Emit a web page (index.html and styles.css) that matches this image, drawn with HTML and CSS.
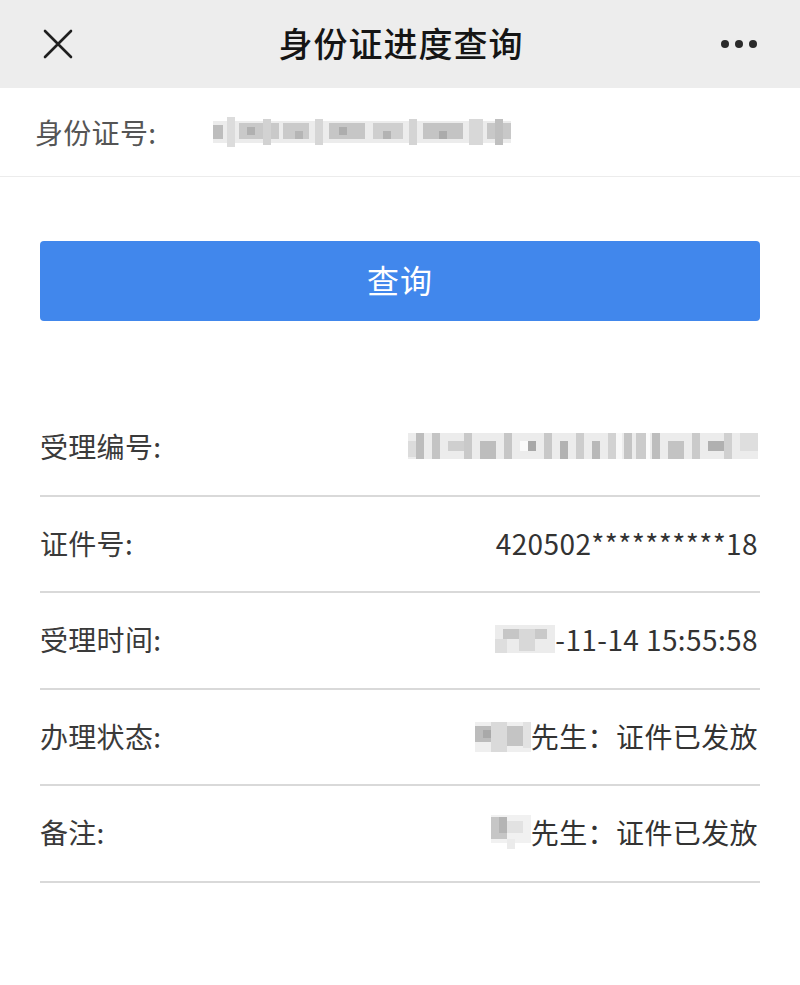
FILE: index.html
```html
<!DOCTYPE html>
<html lang="zh-CN">
<head>
<meta charset="utf-8">
<title>身份证进度查询</title>
<link rel="stylesheet" href="styles.css">
</head>
<body>
<header class="topbar">
  <div class="bar-left">
    <svg class="close" width="32" height="32" viewBox="0 0 32 32"><path d="M3 3 L29 29 M29 3 L3 29" stroke="#1f1f1f" stroke-width="2.6" stroke-linecap="round" fill="none"/></svg>
  </div>
  <h1 class="title">身份证进度查询</h1>
  <div class="bar-right">
    <svg class="more" width="40" height="12" viewBox="0 0 40 12"><circle cx="5" cy="6" r="4" fill="#2a2a2a"/><circle cx="19" cy="6" r="4" fill="#2a2a2a"/><circle cx="33" cy="6" r="4" fill="#2a2a2a"/></svg>
  </div>
</header>

<section class="id-row">
  <span class="id-label">身份证号:</span>
  <svg class="mosaic" width="298" height="34" viewBox="0 0 298 34">
    <rect x="0" y="6" width="298" height="22" fill="#ececec"/>
    <rect x="0" y="10" width="10" height="14" fill="#bdbdbd"/>
    <rect x="14" y="2" width="8" height="30" fill="#dcdcdc"/>
    <rect x="26" y="8" width="40" height="16" fill="#c9c9c9"/>
    <rect x="34" y="12" width="8" height="8" fill="#b0b0b0"/>
    <rect x="50" y="4" width="8" height="26" fill="#d2d2d2"/>
    <rect x="70" y="8" width="26" height="16" fill="#cacaca"/>
    <rect x="82" y="16" width="8" height="8" fill="#b5b5b5"/>
    <rect x="102" y="4" width="8" height="26" fill="#d6d6d6"/>
    <rect x="116" y="8" width="36" height="16" fill="#c6c6c6"/>
    <rect x="126" y="12" width="8" height="8" fill="#adadad"/>
    <rect x="160" y="8" width="30" height="16" fill="#cfcfcf"/>
    <rect x="170" y="16" width="8" height="8" fill="#b3b3b3"/>
    <rect x="196" y="4" width="8" height="26" fill="#d4d4d4"/>
    <rect x="210" y="8" width="40" height="16" fill="#c4c4c4"/>
    <rect x="226" y="16" width="8" height="8" fill="#ababab"/>
    <rect x="256" y="4" width="14" height="26" fill="#d8d8d8"/>
    <rect x="274" y="8" width="24" height="16" fill="#c8c8c8"/>
    <rect x="282" y="4" width="8" height="26" fill="#bfbfbf"/>
  </svg>
</section>

<main class="content">
  <button class="query-btn" type="button">查询</button>

  <div class="result">
    <div class="row">
      <span class="label">受理编号:</span>
      <span class="value">
        <svg class="mosaic" width="350" height="26" viewBox="0 0 350 26">
          <rect x="0" y="0" width="350" height="26" fill="#ececec"/>
          <rect x="0" y="8" width="8" height="16" fill="#dcdcdc"/>
          <rect x="8" y="0" width="8" height="26" fill="#bdbdbd"/>
          <rect x="24" y="0" width="8" height="26" fill="#c4c4c4"/>
          <rect x="40" y="8" width="16" height="10" fill="#cfcfcf"/>
          <rect x="56" y="0" width="8" height="26" fill="#c9c9c9"/>
          <rect x="72" y="8" width="16" height="18" fill="#bdbdbd"/>
          <rect x="96" y="0" width="8" height="26" fill="#c6c6c6"/>
          <rect x="112" y="8" width="8" height="10" fill="#fafafa"/>
          <rect x="120" y="8" width="8" height="10" fill="#a8a8a8"/>
          <rect x="136" y="0" width="8" height="26" fill="#c8c8c8"/>
          <rect x="152" y="8" width="8" height="18" fill="#b2b2b2"/>
          <rect x="168" y="0" width="8" height="26" fill="#cdcdcd"/>
          <rect x="184" y="8" width="8" height="18" fill="#b8b8b8"/>
          <rect x="200" y="0" width="8" height="26" fill="#d2d2d2"/>
          <rect x="208" y="0" width="6" height="26" fill="#f8f8f8"/>
          <rect x="216" y="0" width="8" height="26" fill="#c4c4c4"/>
          <rect x="228" y="0" width="10" height="26" fill="#cbcbcb"/>
          <rect x="238" y="0" width="4" height="26" fill="#fbfbfb"/>
          <rect x="244" y="0" width="8" height="26" fill="#bdbdbd"/>
          <rect x="260" y="8" width="16" height="18" fill="#c3c3c3"/>
          <rect x="284" y="0" width="8" height="26" fill="#cacaca"/>
          <rect x="300" y="8" width="16" height="10" fill="#b0b0b0"/>
          <rect x="316" y="0" width="8" height="26" fill="#d0d0d0"/>
          <rect x="332" y="0" width="18" height="18" fill="#dedede"/>
        </svg>
      </span>
    </div>
    <div class="row">
      <span class="label">证件号:</span>
      <span class="value">420502**********18</span>
    </div>
    <div class="row">
      <span class="label">受理时间:</span>
      <span class="value">
        <svg class="mosaic-inline" width="60" height="28" viewBox="0 0 60 28">
          <rect x="0" y="0" width="60" height="28" fill="#ececec"/>
          <rect x="8" y="4" width="16" height="10" fill="#c6c6c6"/>
          <rect x="24" y="4" width="16" height="22" fill="#d8d8d8"/>
          <rect x="40" y="4" width="12" height="10" fill="#c9c9c9"/>
          <rect x="0" y="14" width="12" height="14" fill="#dedede"/>
        </svg>-11-14 15:55:58</span>
    </div>
    <div class="row">
      <span class="label">办理状态:</span>
      <span class="value">
        <svg class="mosaic-inline" width="56" height="32" viewBox="0 0 56 32">
          <rect x="0" y="2" width="56" height="30" fill="#efefef"/>
          <rect x="0" y="6" width="16" height="16" fill="#bcbcbc"/>
          <rect x="8" y="10" width="8" height="8" fill="#a9a9a9"/>
          <rect x="16" y="2" width="16" height="30" fill="#dadada"/>
          <rect x="32" y="6" width="16" height="20" fill="#c4c4c4"/>
          <rect x="48" y="2" width="8" height="26" fill="#e2e2e2"/>
        </svg>先生：证件已发放</span>
    </div>
    <div class="row">
      <span class="label">备注:</span>
      <span class="value">
        <svg class="mosaic-inline" width="40" height="34" viewBox="0 0 40 34">
          <rect x="0" y="0" width="40" height="28" fill="#f1f1f1"/>
          <rect x="0" y="2" width="16" height="22" fill="#c6c6c6"/>
          <rect x="8" y="2" width="8" height="16" fill="#b4b4b4"/>
          <rect x="16" y="6" width="16" height="12" fill="#e2e2e2"/>
          <rect x="16" y="24" width="8" height="10" fill="#ebebeb"/>
        </svg>先生：证件已发放</span>
    </div>
  </div>
</main>
</body>
</html>
```

FILE: styles.css
```css
* {
  box-sizing: border-box;
}

html, body {
  margin: 0;
  padding: 0;
  background: #ffffff;
}

body {
  font-family: "Noto Sans CJK SC", "Noto Sans", sans-serif;
  color: #333333;
  width: 800px;
}

.topbar {
  height: 88px;
  background: #ededed;
  display: grid;
  grid-template-columns: 1fr auto 1fr;
  align-items: center;
  padding: 0 40px 0 42px;
}

.bar-left {
  display: flex;
  align-items: center;
}

.bar-right {
  display: flex;
  justify-content: flex-end;
  align-items: center;
}

.title {
  margin: 0;
  font-size: 34px;
  font-weight: 500;
  color: #151515;
  letter-spacing: 1px;
  line-height: 1;
  padding-bottom: 2px;
}

.id-row {
  height: 89px;
  border-bottom: 1px solid #ececec;
  display: flex;
  align-items: center;
  padding-left: 35px;
}

.id-label {
  font-size: 28px;
  color: #555555;
  width: 178px;
  letter-spacing: 0.3px;
}

.mosaic {
  display: block;
}

.content {
  padding: 64px 40px 0 40px;
}

.query-btn {
  display: block;
  width: 720px;
  height: 80px;
  border: none;
  border-radius: 4px;
  background: #4187ec;
  color: #ffffff;
  font-family: "Noto Sans CJK SC", "Noto Sans", sans-serif;
  font-size: 32px;
  letter-spacing: 1px;
  padding: 0 0 5px 0;
}

.result {
  margin-top: 79px;
}

.row {
  height: 96.5px;
  border-bottom: 2px solid #d9d9d9;
  display: flex;
  justify-content: space-between;
  align-items: center;
  padding-bottom: 2px;
}

.label {
  font-size: 28px;
  color: #3a3a3a;
  letter-spacing: 0.3px;
}

.value {
  font-size: 28px;
  color: #333333;
  display: flex;
  align-items: center;
  letter-spacing: 0.4px;
  padding-right: 2px;
}

.mosaic-inline {
  display: block;
}
```
